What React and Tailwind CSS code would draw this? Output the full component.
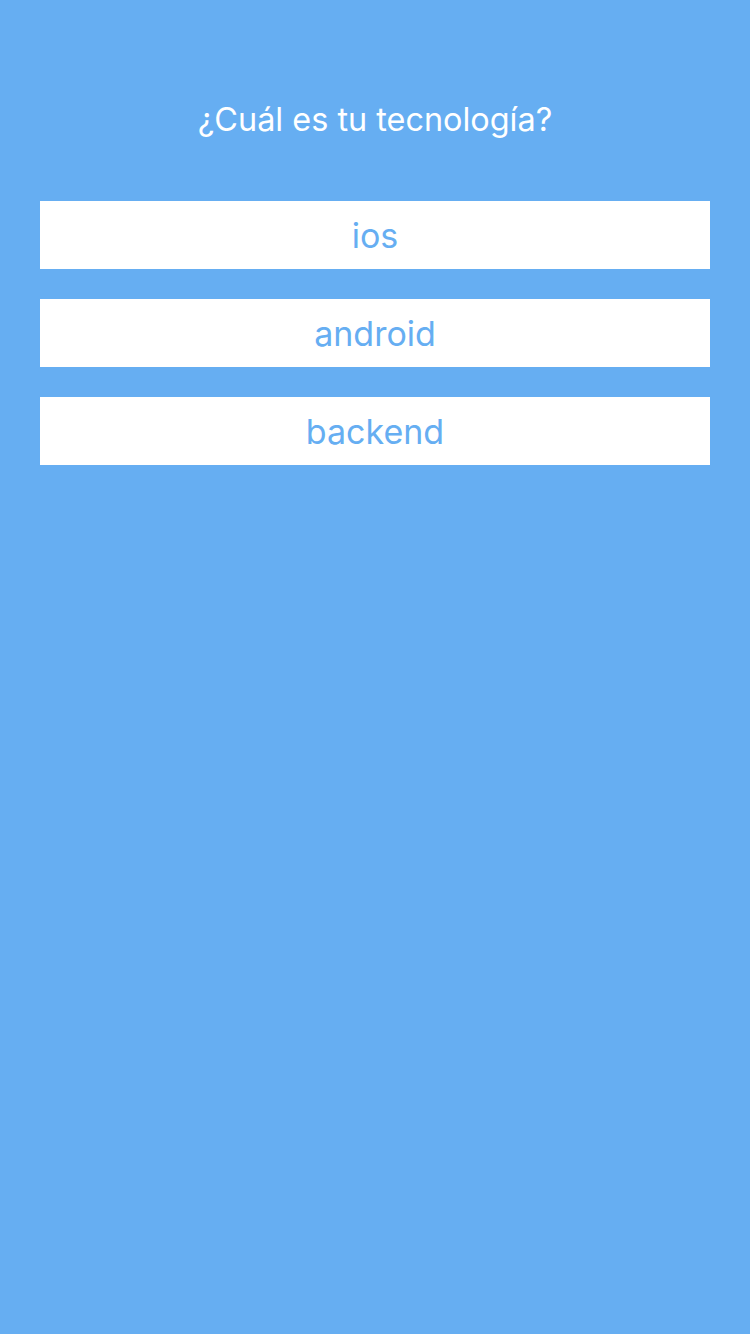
export default function App() {
  const items = ["ios", "android", "backend"];
  return (
    <div className="min-h-[1334px] w-[750px] bg-[#66aef2] flex flex-col items-center pt-[100px]" style={{ fontFamily: "Inter, 'Noto Sans', sans-serif" }}>
      <h1 className="text-white text-[32.4px] leading-[40px] font-normal">¿Cuál es tu tecnología?</h1>
      <div className="mt-[61px] w-full px-[40px] flex flex-col gap-[30px]">
        {items.map((t) => (
          <button key={t} className="h-[68px] w-full bg-white text-[#66aef2] text-[34px] flex items-center justify-center">
            {t}
          </button>
        ))}
      </div>
    </div>
  );
}
